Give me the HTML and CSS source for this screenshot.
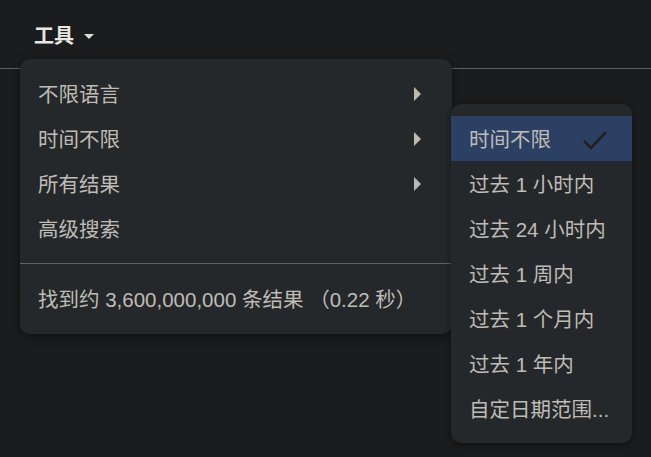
FILE: index.html
```html
<!DOCTYPE html>
<html lang="zh-CN">
<head>
<meta charset="utf-8">
<link rel="stylesheet" href="styles.css">
</head>
<body>
<div class="page">
  <div class="toolbar">
    <div class="tools">工具<span class="caret"></span></div>
  </div>
  <div class="menu main-menu">
    <div class="item"><span>不限语言</span><span class="arrow"></span></div>
    <div class="item"><span>时间不限</span><span class="arrow"></span></div>
    <div class="item"><span>所有结果</span><span class="arrow"></span></div>
    <div class="item"><span>高级搜索</span></div>
    <div class="divider"></div>
    <div class="stats">找到约 3,600,000,000 条结果 （0.22 秒）</div>
  </div>
  <div class="menu sub-menu">
    <div class="item selected"><span>时间不限</span>
      <svg class="check" width="26" height="22" viewBox="0 0 26 22"><path d="M2 12 L9 19 L24 3" fill="none" stroke="#1e2023" stroke-width="2.6"/></svg>
    </div>
    <div class="item"><span>过去 1 小时内</span></div>
    <div class="item"><span>过去 24 小时内</span></div>
    <div class="item"><span>过去 1 周内</span></div>
    <div class="item"><span>过去 1 个月内</span></div>
    <div class="item"><span>过去 1 年内</span></div>
    <div class="item"><span>自定日期范围...</span></div>
  </div>
</div>
</body>
</html>
```

FILE: styles.css
```css
* { box-sizing: border-box; }
html, body {
  margin: 0;
  padding: 0;
  background: #1b1c1e;
  font-family: "Liberation Sans", "Noto Sans CJK SC", sans-serif;
}
.page {
  position: relative;
  width: 651px;
  height: 457px;
  overflow: hidden;
}
.toolbar {
  height: 69px;
  border-bottom: 1px solid #5c5e62;
  padding: 21px 0 0 34px;
}
.tools {
  display: flex;
  align-items: center;
  color: #e8e6e3;
  font-weight: 700;
  font-size: 20px;
  line-height: 30px;
}
.caret {
  margin-left: 10px;
  width: 0;
  height: 0;
  border-left: 5px solid transparent;
  border-right: 5px solid transparent;
  border-top: 5px solid #e0ddd8;
  margin-top: 1px;
}
.menu {
  position: absolute;
  background: #25282a;
  border-radius: 10px;
  box-shadow: 0 2px 8px rgba(0,0,0,0.45);
  padding: 12px 0;
  color: #bfbcb6;
  font-size: 20.5px;
}
.main-menu {
  left: 20px;
  top: 59px;
  width: 432px;
  padding-bottom: 0;
}
.sub-menu {
  left: 451px;
  top: 104px;
  width: 181px;
}
.item {
  height: 45px;
  display: flex;
  align-items: center;
  justify-content: space-between;
  white-space: nowrap;
}
.item span {
  margin-top: -2px;
}
.main-menu .item {
  padding: 0 31px 0 18px;
}
.sub-menu .item {
  padding: 0 24px 0 18px;
}
.item .arrow {
  margin-top: 0;
  width: 0;
  height: 0;
  border-top: 7px solid transparent;
  border-bottom: 7px solid transparent;
  border-left: 7px solid #bdb8b0;
}
.selected {
  background: #2c4063;
}
.check {
  margin-top: 2px;
}
.divider {
  margin-top: 12px;
  height: 1px;
  background: #65615c;
}
.stats {
  height: 70px;
  display: flex;
  align-items: center;
  padding: 0 0 2px 18px;
  white-space: nowrap;
}
```
